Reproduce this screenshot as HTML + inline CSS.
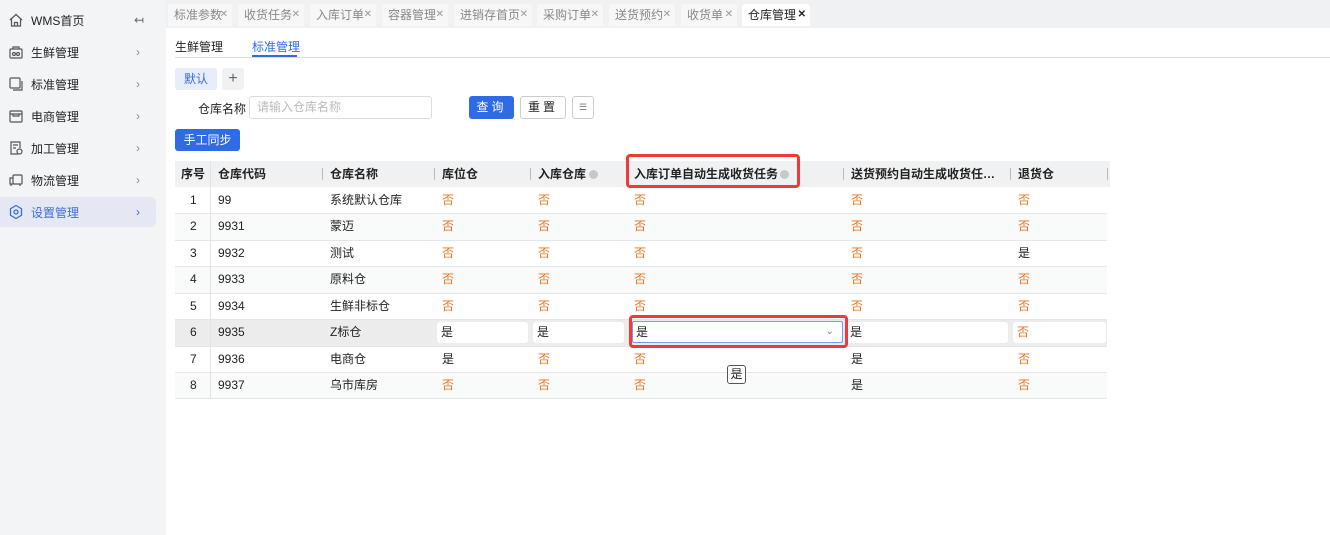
<!DOCTYPE html>
<html><head><meta charset="utf-8">
<style>
*{box-sizing:border-box;margin:0;padding:0}
body{width:1330px;height:535px;overflow:hidden;background:#fff;font-family:"Liberation Sans","Noto Sans CJK SC",sans-serif;font-size:12px;color:#222;position:relative}
.abs{position:absolute}
#side{left:0;top:0;width:166px;height:535px;background:#f3f4f6}
.mi{position:absolute;left:0;width:156px;height:30px;display:flex;align-items:center;font-size:12px;color:#222}
.mi svg{position:absolute;left:8px}
.mi span{position:absolute;left:31px}
.mi .ar{position:absolute;left:136px;color:#888;font-size:12px}
#tabs{left:166px;top:0;width:1164px;height:28px;background:#f0f1f3}
.tab{position:absolute;top:4px;height:22px;background:#f7f7f8;border-radius:3px 3px 0 0;color:#888;font-size:12px;line-height:22px;padding-left:6px;white-space:nowrap;overflow:hidden}
.tab b{font-weight:normal;color:#999;font-size:10px;position:absolute;right:4px;top:0}
.hd{position:absolute;top:161px;height:26px;background:#f0f1f3;font-weight:bold;line-height:26px}
.c{position:absolute;line-height:26px;white-space:nowrap}
.no{color:#e8731a}
.row{position:absolute;left:175px;width:932px;border-bottom:1px solid #e6e6e6}
.sep{position:absolute;top:168px;width:1px;height:12px;background:#bbb}
.inp{position:absolute;top:322px;height:21px;background:#fff;border-radius:3px;line-height:21px;padding-left:4px}
</style></head><body>
<div id="side" class="abs">
 <div class="mi" style="top:5px"><svg width="16" height="16" viewBox="0 0 16 16" fill="none" stroke="#555" stroke-width="1.2"><path d="M2 8 8 2.5 14 8M3.5 7v7h9V7M6.5 14v-3.5h3V14"/></svg><span>WMS首页</span><span class="ar" style="left:134px;color:#666">↤</span></div>
 <div class="mi" style="top:37px"><svg width="16" height="16" viewBox="0 0 16 16" fill="none" stroke="#555" stroke-width="1.2"><rect x="2" y="5" width="12" height="9" rx="1"/><path d="M5 5V3h6v2"/><circle cx="6" cy="10" r="1.5"/><circle cx="10" cy="10" r="1.5"/></svg><span>生鲜管理</span><span class="ar">›</span></div>
 <div class="mi" style="top:69px"><svg width="16" height="16" viewBox="0 0 16 16" fill="none" stroke="#555" stroke-width="1.2"><rect x="2" y="2" width="10" height="10" rx="1"/><path d="M14 5v9H5"/></svg><span>标准管理</span><span class="ar">›</span></div>
 <div class="mi" style="top:101px"><svg width="16" height="16" viewBox="0 0 16 16" fill="none" stroke="#555" stroke-width="1.2"><rect x="2" y="3" width="12" height="11" rx="1"/><path d="M2 6h12M5 6v2h6V6"/></svg><span>电商管理</span><span class="ar">›</span></div>
 <div class="mi" style="top:133px"><svg width="16" height="16" viewBox="0 0 16 16" fill="none" stroke="#555" stroke-width="1.2"><path d="M10 14H3V2h9v6M5 5h5M5 8h3"/><circle cx="11.5" cy="11.5" r="2.5"/></svg><span>加工管理</span><span class="ar">›</span></div>
 <div class="mi" style="top:165px"><svg width="16" height="16" viewBox="0 0 16 16" fill="none" stroke="#555" stroke-width="1.2"><rect x="5" y="3" width="9" height="9" rx="1"/><path d="M5 6H2v6h3M3 12v2M12 12v2"/></svg><span>物流管理</span><span class="ar">›</span></div>
 <div class="mi" style="top:197px;left:0;background:#e5e8f3;border-radius:0 6px 6px 0;color:#3d6be0"><svg width="16" height="16" viewBox="0 0 16 16" fill="none" stroke="#3d6be0" stroke-width="1.3"><path d="M8 1.5 13.5 4.7v6.6L8 14.5 2.5 11.3V4.7z"/><circle cx="8" cy="8" r="2"/></svg><span>设置管理</span><span class="ar" style="color:#3d6be0">›</span></div>
</div>
<div id="tabs" class="abs">
 <div class="tab" style="left:2px;width:64px">标准参数<b>✕</b></div>
 <div class="tab" style="left:72px;width:66px">收货任务<b>✕</b></div>
 <div class="tab" style="left:144px;width:66px">入库订单<b>✕</b></div>
 <div class="tab" style="left:216px;width:66px">容器管理<b>✕</b></div>
 <div class="tab" style="left:288px;width:78px">进销存首页<b>✕</b></div>
 <div class="tab" style="left:371px;width:66px">采购订单<b>✕</b></div>
 <div class="tab" style="left:443px;width:66px">送货预约<b>✕</b></div>
 <div class="tab" style="left:515px;width:56px">收货单<b>✕</b></div>
 <div class="tab" style="left:576px;width:68px;background:#fff;color:#222">仓库管理<b style="color:#222;font-weight:bold">✕</b></div>
</div>
<div class="abs" style="left:175px;top:38px;font-size:12px">生鲜管理</div>
<div class="abs" style="left:252px;top:38px;font-size:12px;color:#2f6be6">标准管理</div>
<div class="abs" style="left:252px;top:55px;width:45px;height:2px;background:#2f6be6"></div>
<div class="abs" style="left:175px;top:57px;width:1155px;height:1px;background:#ddd"></div>
<div class="abs" style="left:175px;top:68px;width:42px;height:22px;background:#e8edfb;border-radius:3px;color:#3d6be0;text-align:center;line-height:22px">默认</div>
<div class="abs" style="left:222px;top:68px;width:22px;height:22px;background:#f0f1f3;border-radius:3px;color:#666;text-align:center;line-height:21px;font-size:16px">+</div>
<div class="abs" style="left:198px;top:100px">仓库名称</div>
<div class="abs" style="left:249px;top:96px;width:183px;height:23px;border:1px solid #ddd;border-radius:3px;color:#bbb;line-height:21px;padding-left:7px">请输入仓库名称</div>
<div class="abs" style="left:469px;top:96px;width:45px;height:23px;background:#2f6be6;border-radius:3px;color:#fff;text-align:center;line-height:23px;letter-spacing:3px">查询</div>
<div class="abs" style="left:520px;top:96px;width:46px;height:23px;border:1px solid #ccc;border-radius:3px;text-align:center;line-height:21px;letter-spacing:3px">重置</div>
<div class="abs" style="left:572px;top:96px;width:22px;height:23px;border:1px solid #ccc;border-radius:3px;text-align:center;line-height:21px;font-size:9px;color:#777">☰</div>
<div class="abs" style="left:175px;top:129px;width:65px;height:22px;background:#2f6be6;border-radius:3px;color:#fff;text-align:center;line-height:22px">手工同步</div>

<div class="hd" style="left:175px;width:935px"></div>
<div class="sep" style="left:322px"></div><div class="sep" style="left:434px"></div><div class="sep" style="left:530px"></div><div class="sep" style="left:843px"></div><div class="sep" style="left:1010px"></div><div class="sep" style="left:1107px"></div>
<div class="c" style="left:181px;top:161px;font-weight:bold">序号</div>
<div class="c" style="left:218px;top:161px;font-weight:bold">仓库代码</div>
<div class="c" style="left:330px;top:161px;font-weight:bold">仓库名称</div>
<div class="c" style="left:442px;top:161px;font-weight:bold">库位仓</div>
<div class="c" style="left:538px;top:161px;font-weight:bold">入库仓库 <span style="display:inline-block;width:9px;height:9px;border-radius:50%;background:#c5c8cc;vertical-align:middle"></span></div>
<div class="c" style="left:634px;top:161px;font-weight:bold">入库订单自动生成收货任务<span style="display:inline-block;width:9px;height:9px;border-radius:50%;background:#c5c8cc;vertical-align:middle;margin-left:2px"></span></div>
<div class="c" style="left:851px;top:161px;font-weight:bold">送货预约自动生成收货任…</div>
<div class="c" style="left:1018px;top:161px;font-weight:bold">退货仓</div>

<div class="row" style="top:187px;height:27px"></div>
<div class="row" style="top:214px;height:27px;background:#f9fafa"></div>
<div class="row" style="top:241px;height:26px"></div>
<div class="row" style="top:267px;height:27px;background:#f9fafa"></div>
<div class="row" style="top:294px;height:26px"></div>
<div class="row" style="top:320px;height:27px;background:#ececec"></div>
<div class="row" style="top:347px;height:26px"></div>
<div class="row" style="top:373px;height:26px;background:#f9fafa"></div>
<div class="abs" style="left:210px;top:161px;width:1px;height:237px;background:#e3e3e3"></div>

<div class="inp" style="left:437px;width:91px">是</div>
<div class="inp" style="left:533px;width:91px">是</div>
<div class="inp" style="left:846px;width:162px">是</div>
<div class="inp" style="left:1013px;width:93px"><span class="no">否</span></div>
<div class="abs" style="left:629px;top:315px;width:219px;height:33px;border:3px solid #f03a3a;border-radius:4px"></div>
<div class="abs" style="left:632px;top:321px;width:211px;height:22px;border:1px solid #6e9cf0;background:#fff;border-radius:2px;line-height:20px;padding-left:3px">是<span style="position:absolute;right:8px;color:#888;font-size:10px">⌄</span></div>
<div class="abs" style="left:626px;top:154px;width:174px;height:34px;border:3px solid #f03a3a;border-radius:4px"></div>
<div class="abs" style="left:727px;top:365px;width:19px;height:19px;border:1px solid #555;border-radius:3px;background:#fff;text-align:center;line-height:17px">是</div>

<div class="c" style="left:190px;top:187px">1</div><div class="c" style="left:218px;top:187px">99</div><div class="c" style="left:330px;top:187px">系统默认仓库</div><div class="c no" style="left:442px;top:187px">否</div><div class="c no" style="left:538px;top:187px">否</div><div class="c no" style="left:634px;top:187px">否</div><div class="c no" style="left:851px;top:187px">否</div><div class="c no" style="left:1018px;top:187px">否</div>
<div class="c" style="left:190px;top:213px">2</div><div class="c" style="left:218px;top:213px">9931</div><div class="c" style="left:330px;top:213px">蒙迈</div><div class="c no" style="left:442px;top:213px">否</div><div class="c no" style="left:538px;top:213px">否</div><div class="c no" style="left:634px;top:213px">否</div><div class="c no" style="left:851px;top:213px">否</div><div class="c no" style="left:1018px;top:213px">否</div>
<div class="c" style="left:190px;top:240px">3</div><div class="c" style="left:218px;top:240px">9932</div><div class="c" style="left:330px;top:240px">测试</div><div class="c no" style="left:442px;top:240px">否</div><div class="c no" style="left:538px;top:240px">否</div><div class="c no" style="left:634px;top:240px">否</div><div class="c no" style="left:851px;top:240px">否</div><div class="c" style="left:1018px;top:240px">是</div>
<div class="c" style="left:190px;top:266px">4</div><div class="c" style="left:218px;top:266px">9933</div><div class="c" style="left:330px;top:266px">原料仓</div><div class="c no" style="left:442px;top:266px">否</div><div class="c no" style="left:538px;top:266px">否</div><div class="c no" style="left:634px;top:266px">否</div><div class="c no" style="left:851px;top:266px">否</div><div class="c no" style="left:1018px;top:266px">否</div>
<div class="c" style="left:190px;top:293px">5</div><div class="c" style="left:218px;top:293px">9934</div><div class="c" style="left:330px;top:293px">生鲜非标仓</div><div class="c no" style="left:442px;top:293px">否</div><div class="c no" style="left:538px;top:293px">否</div><div class="c no" style="left:634px;top:293px">否</div><div class="c no" style="left:851px;top:293px">否</div><div class="c no" style="left:1018px;top:293px">否</div>
<div class="c" style="left:190px;top:319px">6</div><div class="c" style="left:218px;top:319px">9935</div><div class="c" style="left:330px;top:319px">Z标仓</div>
<div class="c" style="left:190px;top:346px">7</div><div class="c" style="left:218px;top:346px">9936</div><div class="c" style="left:330px;top:346px">电商仓</div><div class="c" style="left:442px;top:346px">是</div><div class="c no" style="left:538px;top:346px">否</div><div class="c no" style="left:634px;top:346px">否</div><div class="c" style="left:851px;top:346px">是</div><div class="c no" style="left:1018px;top:346px">否</div>
<div class="c" style="left:190px;top:372px">8</div><div class="c" style="left:218px;top:372px">9937</div><div class="c" style="left:330px;top:372px">乌市库房</div><div class="c no" style="left:442px;top:372px">否</div><div class="c no" style="left:538px;top:372px">否</div><div class="c no" style="left:634px;top:372px">否</div><div class="c" style="left:851px;top:372px">是</div><div class="c no" style="left:1018px;top:372px">否</div>
</body></html>
